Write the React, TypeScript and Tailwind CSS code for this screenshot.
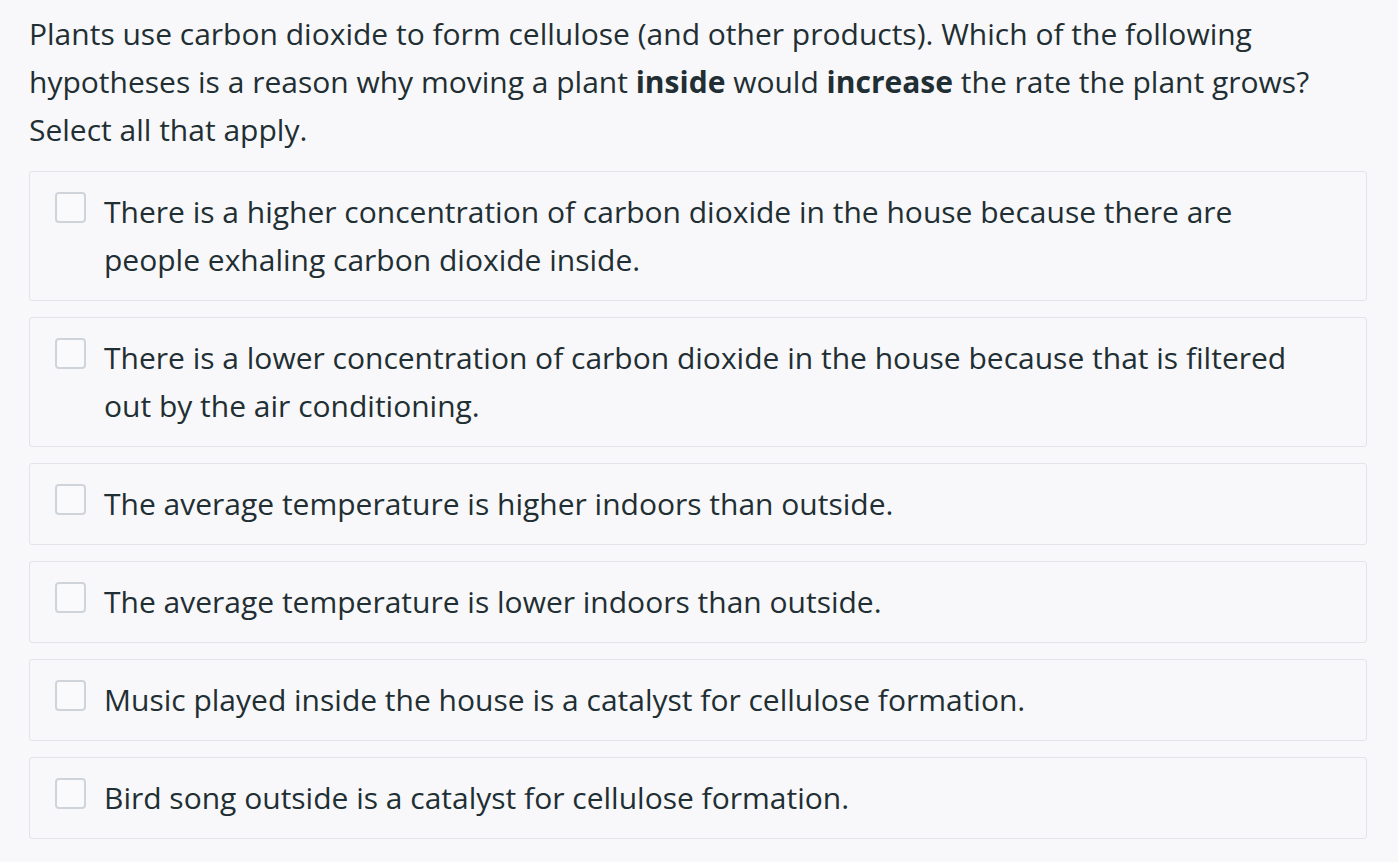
const options = [
  'There is a higher concentration of carbon dioxide in the house because there are people exhaling carbon dioxide inside.',
  'There is a lower concentration of carbon dioxide in the house because that is filtered out by the air conditioning.',
  'The average temperature is higher indoors than outside.',
  'The average temperature is lower indoors than outside.',
  'Music played inside the house is a catalyst for cellulose formation.',
  'Bird song outside is a catalyst for cellulose formation.',
];

export default function App() {
  return (
    <div className="min-h-screen bg-[#f8f8fa] px-[29px] pt-[10px] pb-4 text-[#1f2f33] font-['Open_Sans',sans-serif] text-[30px] leading-[48px]">
      <p className="pr-[20px]">
        Plants use carbon dioxide to form cellulose (and other products). Which of the following
        <br />
        hypotheses is a reason why moving a plant <b className="font-bold">inside</b> would{' '}
        <b className="font-bold">increase</b> the rate the plant grows?
        <br />
        Select all that apply.
      </p>
      <div className="mt-[17px] mr-[2px] flex flex-col gap-4">
        {options.map((text) => (
          <label
            key={text}
            className="flex items-start gap-[18px] rounded-[3px] border border-[#e1e4e9] bg-[#f8f8fa] pl-[25px] pr-[52px] py-4 cursor-pointer"
          >
            <span className="mt-[4px] h-[31px] w-[31px] shrink-0 rounded-[4px] border-2 border-[#cfd4db] bg-[#fafafc]" />
            <span>{text}</span>
          </label>
        ))}
      </div>
    </div>
  );
}
